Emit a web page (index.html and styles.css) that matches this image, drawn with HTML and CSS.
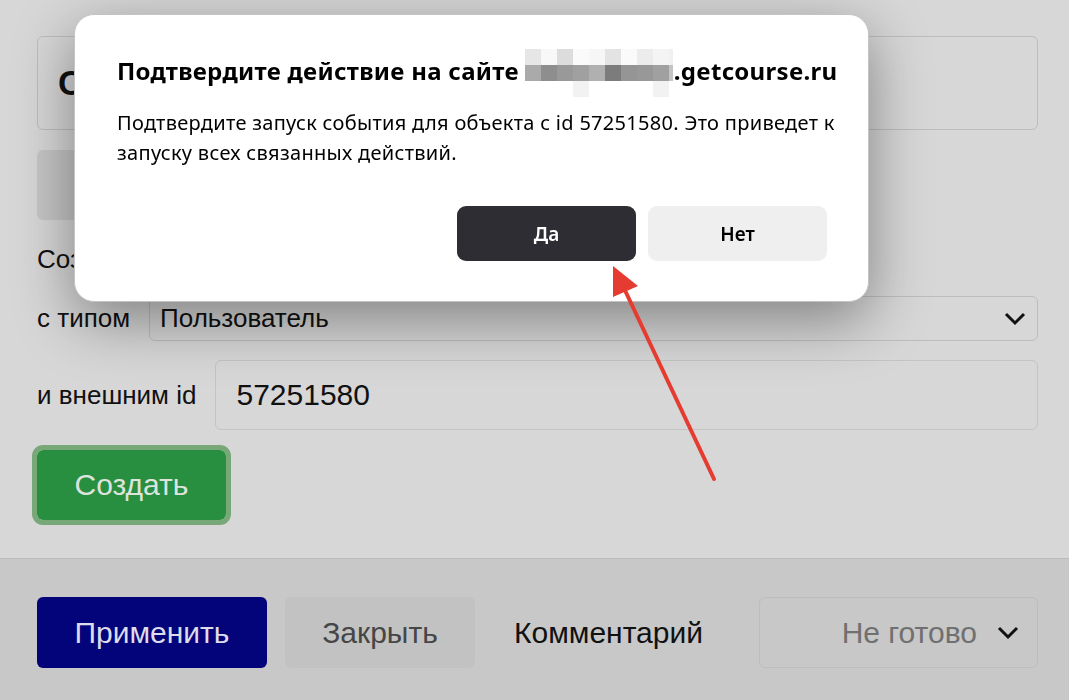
FILE: index.html
```html
<!DOCTYPE html>
<html lang="ru">
<head>
<meta charset="utf-8">
<title>Подтверждение</title>
<link rel="stylesheet" href="styles.css">
</head>
<body>
<div class="main">
  <div class="title-box">Создание объекта</div>
  <div class="gray-block"></div>
  <div class="create-label">Создать объект</div>
  <div class="row row-type">
    <span class="label">с типом</span>
    <div class="select">
      <span>Пользователь</span>
      <svg class="chev" width="22" height="14" viewBox="0 0 22 14"><polyline points="2,2 11,11 20,2" fill="none" stroke="#111" stroke-width="3"/></svg>
    </div>
  </div>
  <div class="row row-id">
    <span class="label">и внешним id</span>
    <div class="input">57251580</div>
  </div>
  <button class="btn-create">Создать</button>
</div>
<div class="footer">
  <button class="btn-apply">Применить</button>
  <button class="btn-close">Закрыть</button>
  <span class="comment">Комментарий</span>
  <div class="status">
    <span>Не готово</span>
    <svg class="chev" width="22" height="14" viewBox="0 0 22 14"><polyline points="2,2 11,11 20,2" fill="none" stroke="#111" stroke-width="3"/></svg>
  </div>
</div>

<div class="dialog">
  <div class="d-title">Подтвердите действие на сайте<svg class="blur" width="148" height="48" viewBox="0 0 148 48">
      <rect x="0" y="0" width="16" height="16" fill="#e6e6e6"/>
      <rect x="16" y="0" width="16" height="16" fill="#f8f8f8"/>
      <rect x="32" y="0" width="16" height="16" fill="#dcdcdc"/>
      <rect x="48" y="0" width="16" height="16" fill="#fafafa"/>
      <rect x="64" y="0" width="16" height="16" fill="#f6f6f6"/>
      <rect x="80" y="0" width="16" height="16" fill="#e3e3e3"/>
      <rect x="96" y="0" width="16" height="16" fill="#fafafa"/>
      <rect x="112" y="0" width="16" height="16" fill="#ececec"/>
      <rect x="128" y="0" width="16" height="16" fill="#f4f4f4"/>
      <rect x="144" y="0" width="4" height="16" fill="#f0f0f0"/>
      <rect x="0" y="16" width="16" height="16" fill="#aaaaaa"/>
      <rect x="16" y="16" width="16" height="16" fill="#8e8e8e"/>
      <rect x="32" y="16" width="16" height="16" fill="#999999"/>
      <rect x="48" y="16" width="16" height="16" fill="#a0a0a0"/>
      <rect x="64" y="16" width="16" height="16" fill="#b0b0b0"/>
      <rect x="80" y="16" width="16" height="16" fill="#7c7c7c"/>
      <rect x="96" y="16" width="16" height="16" fill="#959595"/>
      <rect x="112" y="16" width="16" height="16" fill="#989898"/>
      <rect x="128" y="16" width="16" height="16" fill="#a0a0a0"/>
      <rect x="144" y="16" width="4" height="16" fill="#c4c4c4"/>
      <rect x="48" y="32" width="16" height="16" fill="#f2f2f2"/>
      <rect x="128" y="32" width="16" height="16" fill="#f2f2f2"/>
    </svg>.getcourse.ru</div>
  <p class="d-text">Подтвердите запуск события для объекта с id 57251580. Это приведет к запуску всех связанных действий.</p>
  <div class="d-actions">
    <button class="d-yes">Да</button>
    <button class="d-no">Нет</button>
  </div>
</div>

<svg class="arrow" width="1069" height="700" viewBox="0 0 1069 700">
  <line x1="714" y1="479" x2="622" y2="284" stroke="#e53b30" stroke-width="4" stroke-linecap="round"/>
  <polygon points="613,266 613,297 638,286" fill="#e53b30"/>
</svg>
</body>
</html>
```

FILE: styles.css
```css
* { box-sizing: border-box; }

html, body {
  margin: 0;
  padding: 0;
}

body {
  width: 1069px;
  height: 700px;
  overflow: hidden;
  background: #d7d7d7;
  font-family: "Liberation Sans", Arial, sans-serif;
  color: #111;
}

button {
  font-family: inherit;
  border: none;
  cursor: pointer;
}

.main {
  height: 558px;
  padding: 36px 31px 0 37px;
  display: flex;
  flex-direction: column;
  align-items: flex-start;
}

.title-box {
  width: 100%;
  height: 94px;
  border: 1px solid #bdbdbd;
  border-radius: 6px;
  padding-left: 20px;
  display: flex;
  align-items: center;
  font-size: 35px;
  font-weight: bold;
  color: #111;
}

.gray-block {
  margin-top: 20px;
  width: 320px;
  height: 70px;
  border-radius: 6px;
  background: #c6c6c6;
}

.create-label {
  margin-top: 24px;
  font-size: 26px;
  line-height: 30px;
}

.row {
  width: 100%;
  display: flex;
  align-items: center;
}

.row-type { margin-top: 22px; }
.row-id { margin-top: 19px; }

.label {
  font-size: 26px;
  flex: none;
}

.select {
  margin-left: 19px;
  flex: 1;
  height: 45px;
  border: 1px solid #bdbdbd;
  border-radius: 6px;
  padding: 0 11px 0 10px;
  display: flex;
  align-items: center;
  justify-content: space-between;
  font-size: 26px;
}

.input {
  margin-left: 19px;
  flex: 1;
  height: 70px;
  border: 1px solid #c4c4c4;
  border-radius: 6px;
  padding-left: 20px;
  display: flex;
  align-items: center;
  font-size: 30px;
}

.btn-create {
  margin-top: 20px;
  width: 189px;
  height: 70px;
  border-radius: 6px;
  background: #288f40;
  color: #dde3dd;
  font-size: 30px;
  outline: 5px solid #78a778;
  outline-offset: 0;
}

.footer {
  height: 142px;
  border-top: 1px solid #bcbcbc;
  background: #c8c8c8;
  padding: 38px 31px 0 37px;
  display: flex;
  align-items: flex-start;
}

.btn-apply {
  width: 230px;
  height: 71px;
  border-radius: 6px;
  background: #03037a;
  color: #dcdcea;
  font-size: 30px;
}

.btn-close {
  margin-left: 18px;
  width: 190px;
  height: 71px;
  border-radius: 6px;
  background: #c2c2c2;
  color: #464646;
  font-size: 30px;
}

.comment {
  margin-left: 39px;
  height: 71px;
  display: flex;
  align-items: center;
  font-size: 30px;
  color: #111;
}

.status {
  margin-left: auto;
  width: 279px;
  height: 71px;
  border: 1px solid #bdbdbd;
  border-radius: 6px;
  display: flex;
  align-items: center;
  justify-content: flex-end;
  gap: 20px;
  padding-right: 18px;
  font-size: 30px;
  color: #707070;
}

/* dialog */
.dialog {
  position: fixed;
  left: 74px;
  top: 14px;
  width: 795px;
  height: 288px;
  background: #fff;
  border-radius: 20px;
  border: 1px solid #c4c4c4;
  box-shadow: 0 18px 60px rgba(0, 0, 0, 0.4);
  padding: 41px 41px 40px 42px;
  display: flex;
  flex-direction: column;
  font-family: "Noto Sans", "Open Sans", sans-serif;
  color: #000;
}

.d-title {
  font-size: 24px;
  letter-spacing: 0.3px;
  font-weight: bold;
  line-height: 30px;
  white-space: nowrap;
}

.blur {
  vertical-align: -8px;
  margin: -9px 1px -9px 6px;
}

.d-text {
  margin: 20px -14px 0 0;
  font-size: 20px;
  letter-spacing: 0.3px;
  line-height: 30px;
}

.d-actions {
  margin-top: auto;
  display: flex;
  justify-content: flex-end;
  gap: 12px;
}

.d-actions button {
  width: 179px;
  height: 55px;
  border-radius: 9px;
  font-family: "Noto Sans", "Open Sans", sans-serif;
  font-size: 19px;
  font-weight: 600;
}

.d-yes {
  background: #2e2d33;
  color: #fff;
}

.d-no {
  background: #efefef;
  color: #000;
}

.arrow {
  position: fixed;
  left: 0;
  top: 0;
  pointer-events: none;
}
```
